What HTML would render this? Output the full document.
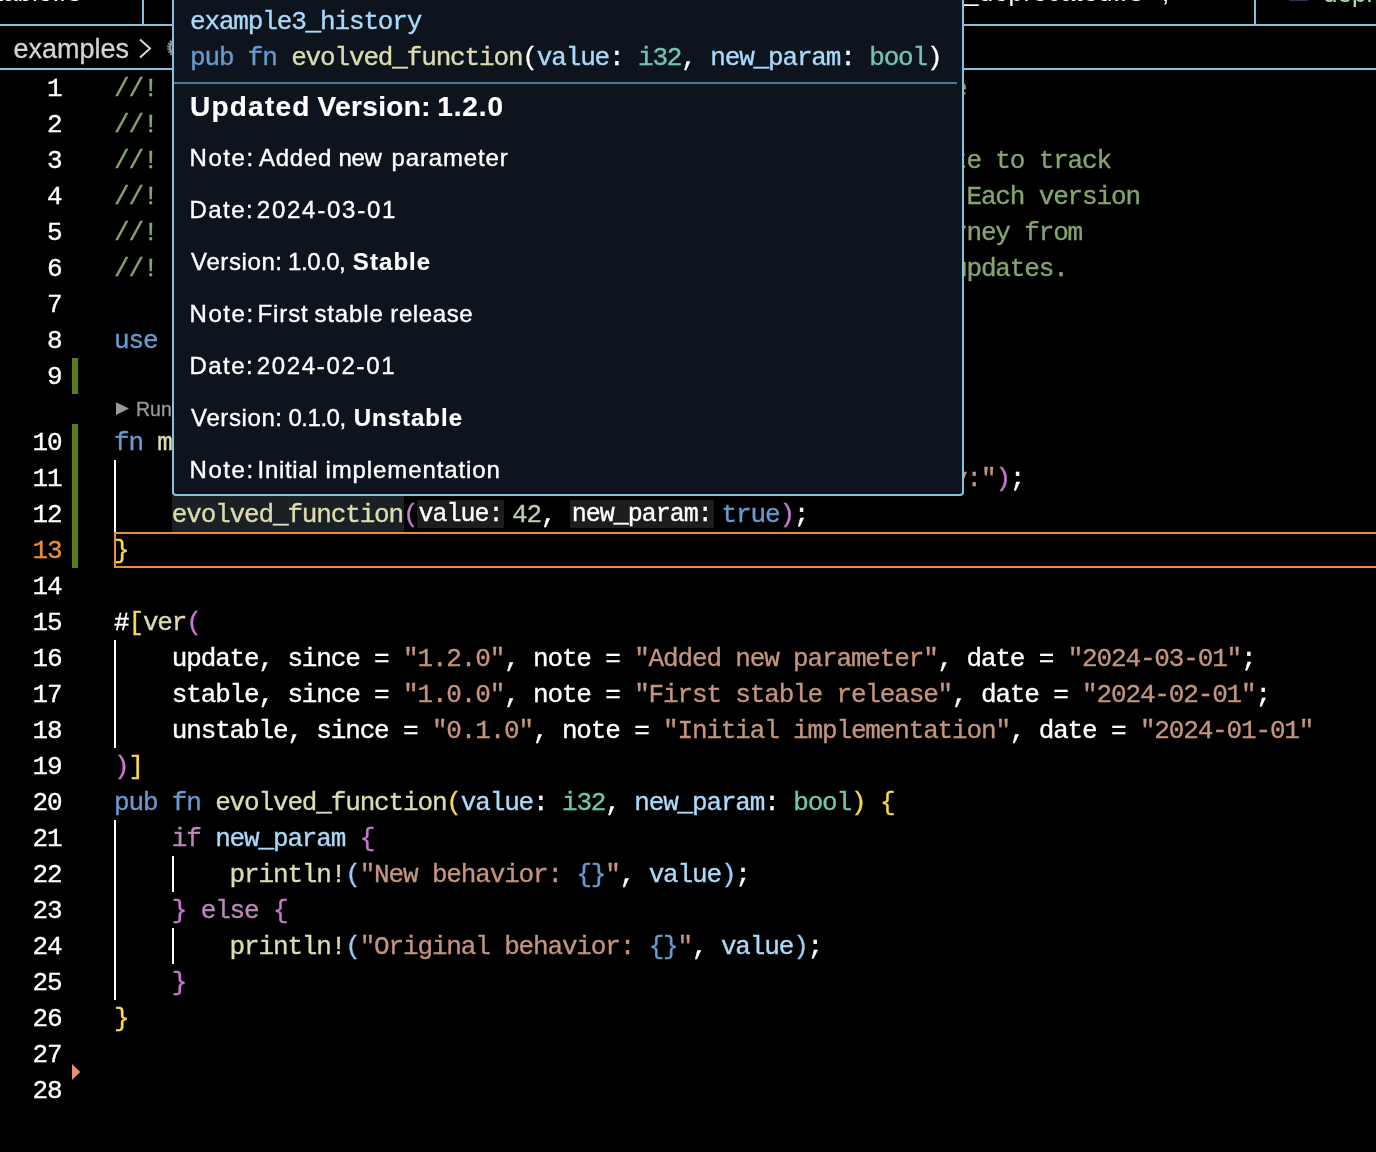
<!DOCTYPE html>
<html><head><meta charset="utf-8"><title>example3_history.rs</title>
<style>
html,body{margin:0;padding:0;background:#000;}
body{width:1376px;height:1152px;overflow:hidden;position:relative;font-family:"Liberation Sans",sans-serif;color:#fff;}
#root{position:absolute;left:0;top:0;width:1376px;height:1152px;overflow:hidden;will-change:transform;}
.abs{position:absolute;}
.hl{position:absolute;background:#83c1dc;}
.mono{font-family:"Liberation Mono",monospace;font-size:26px;letter-spacing:-1.154px;white-space:pre;line-height:36px;height:36px;}
.ln{position:absolute;left:0;width:61.5px;text-align:right;color:#fff;}
.ln span{position:relative;top:1px;}
.cl{position:absolute;left:114px;color:#fff;}
.cl>span,.pc>span{position:relative;top:1px;}
.c{color:#85a56e}.k{color:#679ad1}.kc{color:#bc89bd}.f{color:#dcdcaf}.v{color:#aadafa}.t{color:#71c6b1}
.s{color:#c5947c}.n{color:#bacdab}.w{color:#fff}.b1{color:#f9d849}.b2{color:#cc76d1}.b3{color:#97ccf6}
.guide{position:absolute;width:2px;background:#fff;}
.git{position:absolute;left:72px;width:6px;background:#5c7c24;}
.hint{position:absolute;top:500px;height:27.5px;background:#1d1d1d;border-radius:1.5px;}
.ht{position:absolute;font-family:"Liberation Mono",monospace;white-space:pre;line-height:36px;height:36px;top:496px;color:#fff;}
.pop{position:absolute;left:172px;top:-12px;width:788px;height:504px;border:2px solid #83c1dc;border-radius:4px;background:#0e141e;overflow:hidden;}
.pc{position:absolute;left:18px;color:#fff;}
.p{position:absolute;left:19px;white-space:pre;font-size:24px;line-height:36px;height:36px;color:#fff;}
.p b{font-weight:bold;}
.mono,.ht{-webkit-text-stroke:0.35px currentColor;}
.p{-webkit-text-stroke:0.38px currentColor;}

</style></head><body><div id="root">
<div class="hl" style="left:0;top:24px;width:1376px;height:2px"></div>
<div class="hl" style="left:0;top:68px;width:1376px;height:2px"></div>
<div class="hl" style="left:142px;top:0;width:2px;height:25px"></div>
<div class="hl" style="left:1254px;top:0;width:2px;height:25px"></div>
<div class="abs" style="left:-46px;top:-23.5px;font-size:26px;line-height:30px;white-space:pre;color:#fff">unstable.rs</div>
<div class="abs" style="left:964px;top:-23px;font-size:26px;letter-spacing:0.4px;line-height:30px;white-space:pre;color:#fff">_deprecated.rs</div>
<div class="abs" style="left:1162px;top:-23px;font-size:26px;line-height:30px;white-space:pre;color:#fff">,</div>
<div class="abs" style="left:1289px;top:-18px;width:19px;height:19px;background:#3b2a55"></div>
<div class="abs" style="left:1323px;top:-22px;font-size:26px;line-height:30px;white-space:pre;color:#a5e0a5">depr</div>
<div class="abs" id="bc" style="left:13.5px;top:31px;font-size:27px;letter-spacing:0.0px;line-height:36px;white-space:pre;color:#d4d4d4;-webkit-text-stroke:0.3px #d4d4d4">examples</div>
<svg class="abs" style="left:136px;top:36px" width="18" height="26" viewBox="0 0 18 26"><path d="M4 3.5 L14 12.5 L4 21.5" fill="none" stroke="#d4d4d4" stroke-width="2"/></svg>
<svg class="abs" style="left:166px;top:37px" width="22" height="22" viewBox="0 0 22 22"><circle cx="11" cy="10.5" r="7.2" fill="none" stroke="#858f92" stroke-width="3"/><circle cx="11" cy="10.5" r="9.2" fill="none" stroke="#858f92" stroke-width="1.6" stroke-dasharray="1.6 1.3"/></svg>
<div class="git" style="top:358px;height:36px"></div>
<div class="git" style="top:424px;height:144px"></div>
<svg class="abs" style="left:72px;top:1064px" width="9" height="16" viewBox="0 0 9 16"><path d="M0 0 L8.3 8 L0 16 Z" fill="#e58c77"/></svg>
<div class="abs" style="left:172px;top:496px;width:232px;height:36px;background:#1b2025"></div>
<div class="abs" style="left:114px;top:532px;width:1270px;height:32px;border:2px solid #e88f3b;"></div>
<div class="guide" style="left:114px;top:460px;height:72px"></div>
<div class="guide" style="left:114px;top:640px;height:108px"></div>
<div class="guide" style="left:114px;top:820px;height:180px"></div>
<div class="guide" style="left:172px;top:856px;height:36px"></div>
<div class="guide" style="left:172px;top:928px;height:36px"></div>
<div class="ln mono" style="top:70px;color:#fff"><span>1</span></div>
<div class="ln mono" style="top:106px;color:#fff"><span>2</span></div>
<div class="ln mono" style="top:142px;color:#fff"><span>3</span></div>
<div class="ln mono" style="top:178px;color:#fff"><span>4</span></div>
<div class="ln mono" style="top:214px;color:#fff"><span>5</span></div>
<div class="ln mono" style="top:250px;color:#fff"><span>6</span></div>
<div class="ln mono" style="top:286px;color:#fff"><span>7</span></div>
<div class="ln mono" style="top:322px;color:#fff"><span>8</span></div>
<div class="ln mono" style="top:358px;color:#fff"><span>9</span></div>
<div class="ln mono" style="top:424px;color:#fff"><span>10</span></div>
<div class="ln mono" style="top:460px;color:#fff"><span>11</span></div>
<div class="ln mono" style="top:496px;color:#fff"><span>12</span></div>
<div class="ln mono" style="top:532px;color:#e88f3b"><span>13</span></div>
<div class="ln mono" style="top:568px;color:#fff"><span>14</span></div>
<div class="ln mono" style="top:604px;color:#fff"><span>15</span></div>
<div class="ln mono" style="top:640px;color:#fff"><span>16</span></div>
<div class="ln mono" style="top:676px;color:#fff"><span>17</span></div>
<div class="ln mono" style="top:712px;color:#fff"><span>18</span></div>
<div class="ln mono" style="top:748px;color:#fff"><span>19</span></div>
<div class="ln mono" style="top:784px;color:#fff"><span>20</span></div>
<div class="ln mono" style="top:820px;color:#fff"><span>21</span></div>
<div class="ln mono" style="top:856px;color:#fff"><span>22</span></div>
<div class="ln mono" style="top:892px;color:#fff"><span>23</span></div>
<div class="ln mono" style="top:928px;color:#fff"><span>24</span></div>
<div class="ln mono" style="top:964px;color:#fff"><span>25</span></div>
<div class="ln mono" style="top:1000px;color:#fff"><span>26</span></div>
<div class="ln mono" style="top:1036px;color:#fff"><span>27</span></div>
<div class="ln mono" style="top:1072px;color:#fff"><span>28</span></div>
<svg class="abs" style="left:116px;top:402px" width="14" height="14" viewBox="0 0 14 14"><path d="M0 0.3 L13 6.6 L0 12.9 Z" fill="#999"/></svg>
<div class="abs" id="lens" style="left:136px;top:394px;font-size:19.5px;line-height:30px;white-space:pre;color:#999;-webkit-text-stroke:0.3px #999">Run | Debug</div>
<div class="cl mono" style="top:70px"><span class="c">//! Example 3: evolving a public function over each release</span></div>
<div class="cl mono" style="top:106px"><span class="c">//!</span></div>
<div class="cl mono" style="top:142px"><span class="c">//! This example shows how you attach the `#[ver]` attribute to track</span></div>
<div class="cl mono" style="top:178px"><span class="c">//! the complete history of a public item as it changes.   Each version</span></div>
<div class="cl mono" style="top:214px"><span class="c">//! entry records a note and a date, showing the whole journey from</span></div>
<div class="cl mono" style="top:250px"><span class="c">//! an unstable prototype to a stable API and a few later updates.</span></div>
<div class="cl mono" style="top:322px"><span class="k">use</span><span class="w"> ver_stub_derive::ver;</span></div>
<div class="cl mono" style="top:424px"><span class="k">fn</span><span class="w"> </span><span class="f">main</span><span class="b1">()</span><span class="w"> </span><span class="b1">{</span></div>
<div class="cl mono" style="top:460px"><span class="w">    </span><span class="f">println!</span><span class="b2">(</span><span class="s">"Calling evolved_function with version history:"</span><span class="b2">)</span><span class="w">;</span></div>
<div class="cl mono" style="top:532px"><span class="b1">}</span></div>
<div class="cl mono" style="top:604px"><span class="w">#</span><span class="b1">[</span><span class="f">ver</span><span class="b2">(</span></div>
<div class="cl mono" style="top:640px"><span class="w">    update, since = </span><span class="s">"1.2.0"</span><span class="w">, note = </span><span class="s">"Added new parameter"</span><span class="w">, date = </span><span class="s">"2024-03-01"</span><span class="w">;</span></div>
<div class="cl mono" style="top:676px"><span class="w">    stable, since = </span><span class="s">"1.0.0"</span><span class="w">, note = </span><span class="s">"First stable release"</span><span class="w">, date = </span><span class="s">"2024-02-01"</span><span class="w">;</span></div>
<div class="cl mono" style="top:712px"><span class="w">    unstable, since = </span><span class="s">"0.1.0"</span><span class="w">, note = </span><span class="s">"Initial implementation"</span><span class="w">, date = </span><span class="s">"2024-01-01"</span></div>
<div class="cl mono" style="top:748px"><span class="b2">)</span><span class="b1">]</span></div>
<div class="cl mono" style="top:784px"><span class="k">pub</span><span class="w"> </span><span class="k">fn</span><span class="w"> </span><span class="f">evolved_function</span><span class="b1">(</span><span class="v">value</span><span class="w">: </span><span class="t">i32</span><span class="w">, </span><span class="v">new_param</span><span class="w">: </span><span class="t">bool</span><span class="b1">)</span><span class="w"> </span><span class="b1">{</span></div>
<div class="cl mono" style="top:820px"><span class="w">    </span><span class="kc">if</span><span class="w"> </span><span class="v">new_param</span><span class="w"> </span><span class="b2">{</span></div>
<div class="cl mono" style="top:856px"><span class="w">        </span><span class="f">println!</span><span class="b3">(</span><span class="s">"New behavior: </span><span class="k">{}</span><span class="s">"</span><span class="w">, </span><span class="v">value</span><span class="b3">)</span><span class="w">;</span></div>
<div class="cl mono" style="top:892px"><span class="w">    </span><span class="b2">}</span><span class="w"> </span><span class="kc">else</span><span class="w"> </span><span class="b2">{</span></div>
<div class="cl mono" style="top:928px"><span class="w">        </span><span class="f">println!</span><span class="b3">(</span><span class="s">"Original behavior: </span><span class="k">{}</span><span class="s">"</span><span class="w">, </span><span class="v">value</span><span class="b3">)</span><span class="w">;</span></div>
<div class="cl mono" style="top:964px"><span class="w">    </span><span class="b2">}</span></div>
<div class="cl mono" style="top:1000px"><span class="b1">}</span></div>
<div class="cl mono" style="left:114.00px;top:496px"><span class="w">    </span><span class="f">evolved_function</span><span class="b2">(</span></div>
<div class="hint" style="left:417px;width:87px"></div>
<div class="ht" id="h1" style="left:418.6px;font-size:25px;letter-spacing:-1.002px"><span style="position:relative;top:1px">value:</span></div>
<div class="cl mono" style="left:512.00px;top:496px"><span class="n">42</span><span class="w">, </span></div>
<div class="hint" style="left:570px;width:143.6px"></div>
<div class="ht" id="h2" style="left:571.8px;font-size:25px;letter-spacing:-1.002px"><span style="position:relative;top:1px">new_param:</span></div>
<div class="cl mono" style="left:721.60px;top:496px"><span class="k">true</span><span class="b2">)</span><span class="w">;</span></div>
<div class="pop"><div style="position:absolute;left:0;top:8px;width:788px;height:500px">
<div class="pc mono" style="left:16px;top:4.5px"><span class="v">example3_history</span></div>
<div class="pc mono" style="left:16px;top:40.5px"><span class="k">pub</span><span class="w"> </span><span class="k">fn</span><span class="w"> </span><span class="f">evolved_function</span><span class="w">(</span><span class="v">value</span><span class="w">: </span><span class="t">i32</span><span class="w">, </span><span class="v">new_param</span><span class="w">: </span><span class="t">bool</span><span class="w">)</span></div>
<div class="abs" style="left:0;top:84px;width:783px;height:2px;background:#4d7a92"></div>
<div class="p" style="left:16.10px;top:91px;font-size:28px;letter-spacing:1.2px;font-weight:bold;-webkit-text-stroke:0.2px #fff;">Updated</div>
<div class="p" style="left:143.60px;top:91px;font-size:28px;letter-spacing:0.343px;font-weight:bold;-webkit-text-stroke:0.2px #fff;">Version:</div>
<div class="p" style="left:263.20px;top:91px;font-size:28px;letter-spacing:0.9px;font-weight:bold;-webkit-text-stroke:0.2px #fff;">1.2.0</div>
<div class="p" style="left:15.60px;top:142px;font-size:24px;letter-spacing:1.55px;">Note:</div>
<div class="p" style="left:85.10px;top:142px;font-size:24px;letter-spacing:0.7px;">Added</div>
<div class="p" style="left:164.40px;top:142px;font-size:24px;letter-spacing:-0.3px;">new</div>
<div class="p" style="left:217.50px;top:142px;font-size:24px;letter-spacing:0.849px;">parameter</div>
<div class="p" style="left:15.60px;top:194px;font-size:24px;letter-spacing:1.4px;">Date:</div>
<div class="p" style="left:82.80px;top:194px;font-size:24px;letter-spacing:1.755px;">2024-03-01</div>
<div class="p" style="left:17.10px;top:246px;font-size:24px;letter-spacing:0.6px;">Version:</div>
<div class="p" style="left:114.10px;top:246px;font-size:24px;letter-spacing:-0.48px;">1.0.0,</div>
<div class="p" style="left:178.80px;top:246px;font-size:24px;letter-spacing:1.08px;font-weight:bold;-webkit-text-stroke:0.2px #fff;">Stable</div>
<div class="p" style="left:15.60px;top:298px;font-size:24px;letter-spacing:1.55px;">Note:</div>
<div class="p" style="left:83.60px;top:298px;font-size:24px;letter-spacing:0.85px;">First</div>
<div class="p" style="left:140.40px;top:298px;font-size:24px;letter-spacing:0.88px;">stable</div>
<div class="p" style="left:216.30px;top:298px;font-size:24px;letter-spacing:0.6px;">release</div>
<div class="p" style="left:15.60px;top:350px;font-size:24px;letter-spacing:1.4px;">Date:</div>
<div class="p" style="left:82.80px;top:350px;font-size:24px;letter-spacing:1.667px;">2024-02-01</div>
<div class="p" style="left:17.10px;top:402px;font-size:24px;letter-spacing:0.6px;">Version:</div>
<div class="p" style="left:114.50px;top:402px;font-size:24px;letter-spacing:-0.48px;">0.1.0,</div>
<div class="p" style="left:179.70px;top:402px;font-size:24px;letter-spacing:1.0px;font-weight:bold;-webkit-text-stroke:0.2px #fff;">Unstable</div>
<div class="p" style="left:15.60px;top:454px;font-size:24px;letter-spacing:1.55px;">Note:</div>
<div class="p" style="left:83.60px;top:454px;font-size:24px;letter-spacing:0.667px;">Initial</div>
<div class="p" style="left:151.50px;top:454px;font-size:24px;letter-spacing:0.892px;">implementation</div>
</div></div>
</div></body></html>
